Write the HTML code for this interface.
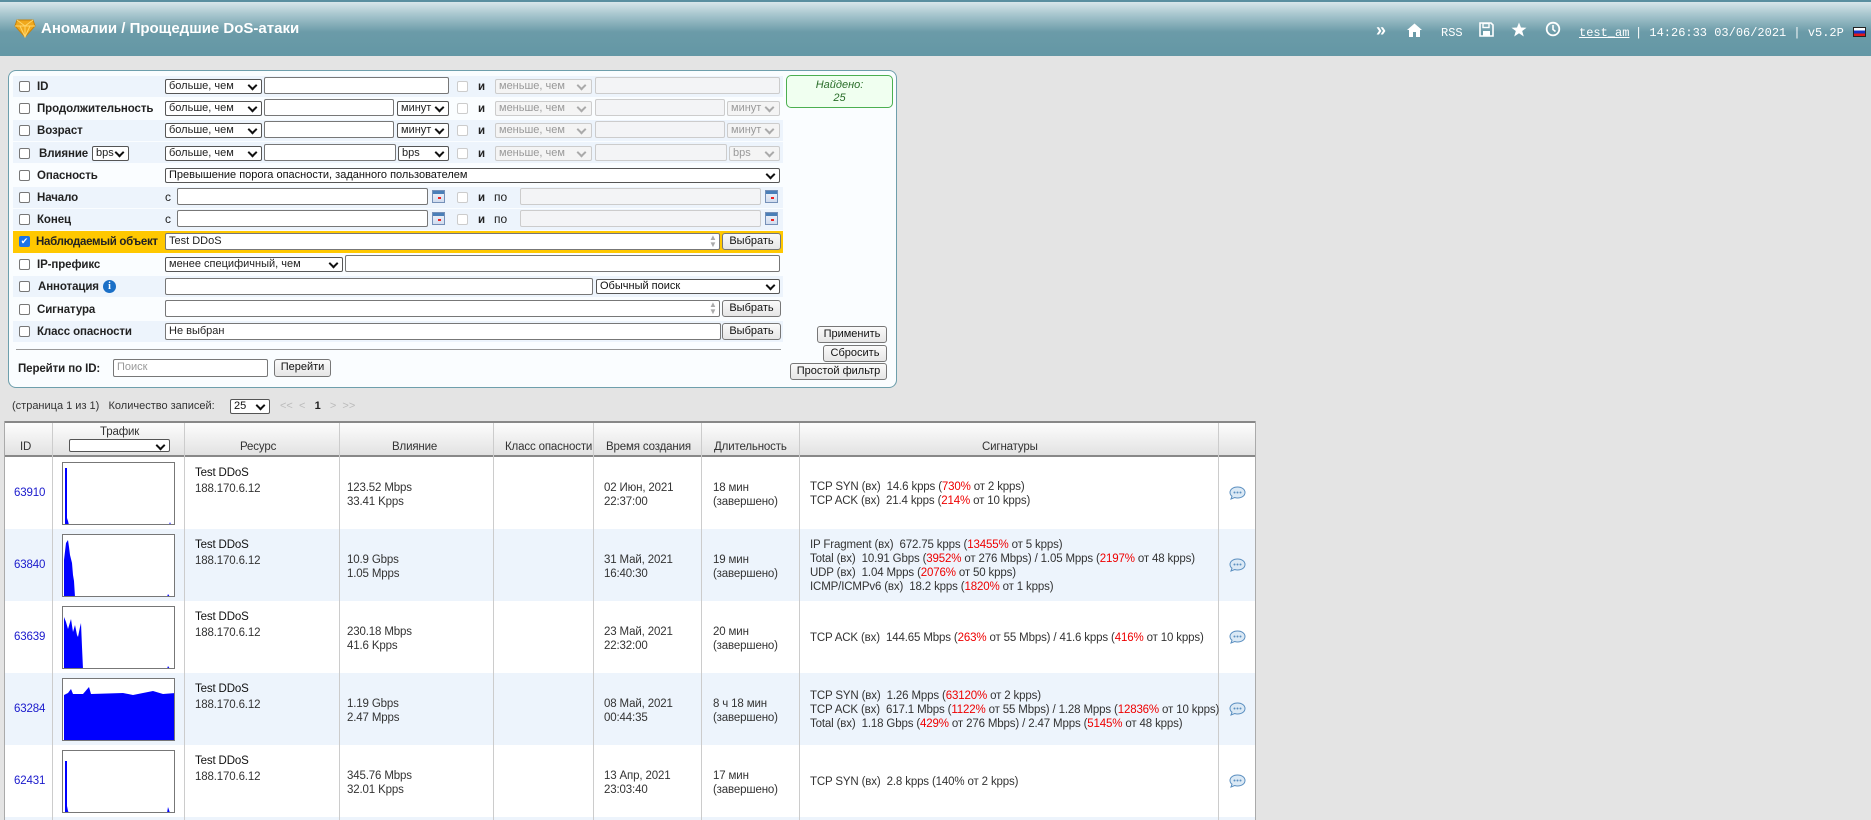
<!DOCTYPE html>
<html><head><meta charset="utf-8"><style>
*{box-sizing:border-box;margin:0;padding:0}
body{width:1871px;height:820px;overflow:hidden;background:#e4e4e4;font-family:"Liberation Sans",Arial,sans-serif;font-size:12px;color:#222;position:relative}
.a{position:absolute}
.hdr{left:0;top:0;width:1871px;height:56px;background:linear-gradient(#d8e6ea 0,#a9c7cf 12px,#6b9ba8 30px,#6397a5 56px);border-top:2px solid #5a8fa0}
.ttl{left:41px;top:20px;color:#fff;font-weight:bold;font-size:15px}
.hr{top:26px;color:#fff;font-family:"Liberation Mono",monospace;font-size:12px}
.panel{left:8px;top:70px;width:889px;height:318px;background:#fafdff;border:1px solid #6e9fac;border-radius:8px}
.row{left:13px;width:770px;height:21px}
.lb{font-weight:bold;font-size:11.5px;color:#222;letter-spacing:-0.1px;line-height:14px;padding-top:1px}
.cb{width:11px;height:11px;border:1px solid #777;border-radius:2px;background:#fff}
.cbd{width:11px;height:11px;border:1px solid #ccc;border-radius:2px;background:#fff}
.sel{height:15px;border:1px solid #555;background:#fff;font-size:11px;padding-left:3px;line-height:13px;border-radius:2px}
.sel:after{content:"";position:absolute;right:5px;top:2px;width:5px;height:5px;border-right:2px solid #111;border-bottom:2px solid #111;transform:rotate(45deg)}
.seld{height:15px;border:1px solid #ccc;background:#f4f4f4;color:#999;font-size:11px;padding-left:3px;line-height:13px;border-radius:2px}
.seld:after{content:"";position:absolute;right:6px;top:2px;width:5px;height:5px;border-right:2px solid #aaa;border-bottom:2px solid #aaa;transform:rotate(45deg)}
.inp{height:17px;border:1px solid #777;background:#fff;border-radius:2px;font-size:11px;padding-left:3px;line-height:15px}
.inpd{height:17px;border:1px solid #ccc;background:#f3f4f6;border-radius:2px}
.btn{height:17px;border:1px solid #777;background:linear-gradient(#fafafa,#e6e6e6);border-radius:3px;font-size:11px;text-align:center;line-height:15px;color:#111}
.cal{width:13px;height:13px;background:linear-gradient(#4a7fb8 0,#4a7fb8 3px,#e8eef8 3px,#d0dcef 100%);border:1px solid #7590b8}
.cal:after{content:"";position:absolute;left:5px;top:6px;width:3px;height:2px;background:#e22}
.th{top:421px;height:36px;background:linear-gradient(#fdfdfd,#e2e2e2);border-top:2px solid #888;border-bottom:2px solid #888}
.c{font-size:11.5px;color:#333;line-height:14px;letter-spacing:-0.15px;white-space:nowrap}
.gr{border:1px solid #777;background:#fff;width:113px;height:63px;overflow:hidden}
.r{color:#e00}
</style></head><body>
<div class="a hdr"></div>
<svg class="a" style="left:14px;top:18px" width="22" height="20" viewBox="0 0 22 20"><polygon points="3,2 19,2 21,8 11,19 1,8" fill="#f0a81c" stroke="#c7820a"/><path d="M3,2 L11,8 L19,2 M1,8 L11,8 L21,8 M11,8 L11,19 M6,8 L11,19 L16,8" stroke="#ffd66a" fill="none" stroke-width="1"/></svg>
<div class="a ttl">Аномалии / Прощедшие DoS-атаки</div>
<div class="a hr" style="left:1376px;top:20px;font-size:18px;font-family:'Liberation Sans';font-weight:bold">»</div>
<svg class="a" style="left:1406px;top:23px" width="17" height="14" viewBox="0 0 17 14"><path d="M1,7 L8.5,0.5 L16,7 L14,7 L14,14 L10,14 L10,9 L7,9 L7,14 L3,14 L3,7Z" fill="#fff"/></svg>
<div class="a hr" style="left:1441px">RSS</div>
<svg class="a" style="left:1479px;top:22px" width="15" height="15" viewBox="0 0 15 15"><path d="M1,1 H12 L14,3 V14 H1Z" fill="none" stroke="#fff" stroke-width="1.6"/><rect x="4" y="1.5" width="6" height="4" fill="none" stroke="#fff" stroke-width="1.4"/><rect x="4" y="9" width="7" height="5" fill="#fff"/></svg>
<svg class="a" style="left:1511px;top:22px" width="16" height="15" viewBox="0 0 16 15"><polygon points="8,0.5 10,5.5 15.5,5.7 11.2,9 12.8,14.5 8,11.3 3.2,14.5 4.8,9 0.5,5.7 6,5.5" fill="#fff"/></svg>
<svg class="a" style="left:1545px;top:21px" width="16" height="16" viewBox="0 0 16 16"><circle cx="8" cy="8" r="6.3" fill="none" stroke="#fff" stroke-width="1.8"/><path d="M8,4 V8.5 L10.5,10.5" stroke="#fff" stroke-width="1.6" fill="none"/></svg>
<div class="a hr" style="left:1579px;text-decoration:underline">test_am</div>
<div class="a hr" style="left:1635px">| 14:26:33 03/06/2021 | v5.2P</div>
<div class="a" style="left:1853px;top:27px;width:13px;height:10px;border:1px solid #222;background:linear-gradient(#fff 33%,#1432c8 33%,#1432c8 66%,#e01818 66%)"></div>

<div class="a panel"></div>
<div class="a row" style="top:76px;background:#edf4fc"></div>
<div class="a row" style="top:120px;background:#edf4fc"></div>
<div class="a row" style="top:142px;background:#edf4fc"></div>
<div class="a row" style="top:187px;background:#edf4fc"></div>
<div class="a row" style="top:209px;background:#edf4fc"></div>
<div class="a row" style="top:231px;background:#ffc800;height:22px"></div>
<div class="a row" style="top:276px;background:#edf4fc"></div>
<div class="a row" style="top:321px;background:#edf4fc"></div>

<div class="a cb" style="left:19px;top:81px"></div><div class="a lb" style="left:37px;top:79px">ID</div>
<div class="a sel" style="left:165px;top:79px;width:97px">больше, чем</div>
<div class="a inp" style="left:264px;top:77px;width:185px"></div>
<div class="a cbd" style="left:457px;top:81px"></div><div class="a lb" style="left:478px;top:79px">и</div>
<div class="a seld" style="left:495px;top:79px;width:97px">меньше, чем</div>
<div class="a inpd" style="left:595px;top:77px;width:185px"></div>

<div class="a cb" style="left:19px;top:103px"></div><div class="a lb" style="left:37px;top:101px">Продолжительность</div>
<div class="a sel" style="left:165px;top:101px;width:97px">больше, чем</div>
<div class="a inp" style="left:264px;top:99px;width:130px"></div>
<div class="a sel" style="left:397px;top:101px;width:52px">минут</div>
<div class="a cbd" style="left:457px;top:103px"></div><div class="a lb" style="left:478px;top:101px">и</div>
<div class="a seld" style="left:495px;top:101px;width:97px">меньше, чем</div>
<div class="a inpd" style="left:595px;top:99px;width:130px"></div>
<div class="a seld" style="left:727px;top:101px;width:53px">минут</div>

<div class="a cb" style="left:19px;top:125px"></div><div class="a lb" style="left:37px;top:123px">Возраст</div>
<div class="a sel" style="left:165px;top:123px;width:97px">больше, чем</div>
<div class="a inp" style="left:264px;top:121px;width:130px"></div>
<div class="a sel" style="left:397px;top:123px;width:52px">минут</div>
<div class="a cbd" style="left:457px;top:125px"></div><div class="a lb" style="left:478px;top:123px">и</div>
<div class="a seld" style="left:495px;top:123px;width:97px">меньше, чем</div>
<div class="a inpd" style="left:595px;top:121px;width:130px"></div>
<div class="a seld" style="left:727px;top:123px;width:53px">минут</div>

<div class="a cb" style="left:19px;top:148px"></div><div class="a lb" style="left:39px;top:146px">Влияние</div>
<div class="a sel" style="left:92px;top:146px;width:37px">bps</div>
<div class="a sel" style="left:165px;top:146px;width:97px">больше, чем</div>
<div class="a inp" style="left:264px;top:144px;width:132px"></div>
<div class="a sel" style="left:398px;top:146px;width:51px">bps</div>
<div class="a cbd" style="left:457px;top:148px"></div><div class="a lb" style="left:478px;top:146px">и</div>
<div class="a seld" style="left:495px;top:146px;width:97px">меньше, чем</div>
<div class="a inpd" style="left:595px;top:144px;width:132px"></div>
<div class="a seld" style="left:729px;top:146px;width:51px">bps</div>

<div class="a cb" style="left:19px;top:170px"></div><div class="a lb" style="left:37px;top:168px">Опасность</div>
<div class="a sel" style="left:165px;top:168px;width:615px;color:#111">Превышение порога опасности, заданного пользователем</div>

<div class="a cb" style="left:19px;top:192px"></div><div class="a lb" style="left:37px;top:190px">Начало</div>
<div class="a" style="left:165px;top:190px">с</div>
<div class="a inp" style="left:177px;top:188px;width:251px"></div>
<div class="a cal" style="left:432px;top:190px"></div>
<div class="a cbd" style="left:457px;top:192px"></div><div class="a lb" style="left:478px;top:190px">и</div><div class="a" style="left:494px;top:190px">по</div>
<div class="a inpd" style="left:520px;top:188px;width:241px"></div>
<div class="a cal" style="left:765px;top:190px"></div>

<div class="a cb" style="left:19px;top:214px"></div><div class="a lb" style="left:37px;top:212px">Конец</div>
<div class="a" style="left:165px;top:212px">с</div>
<div class="a inp" style="left:177px;top:210px;width:251px"></div>
<div class="a cal" style="left:432px;top:212px"></div>
<div class="a cbd" style="left:457px;top:214px"></div><div class="a lb" style="left:478px;top:212px">и</div><div class="a" style="left:494px;top:212px">по</div>
<div class="a inpd" style="left:520px;top:210px;width:241px"></div>
<div class="a cal" style="left:765px;top:212px"></div>

<div class="a" style="left:19px;top:236px;width:11px;height:11px;background:#1a73e8;border-radius:2px;color:#fff;font-size:9px;line-height:11px;text-align:center">✔</div>
<div class="a lb" style="left:36px;top:234px;letter-spacing:-0.3px">Наблюдаемый объект</div>
<div class="a inp" style="left:165px;top:233px;width:555px">Test DDoS</div>
<div class="a" style="left:709px;top:234px;color:#aaa;font-size:8px;line-height:7px">▲<br>▼</div>
<div class="a btn" style="left:722px;top:233px;width:59px">Выбрать</div>

<div class="a cb" style="left:19px;top:259px"></div><div class="a lb" style="left:37px;top:257px">IP-префикс</div>
<div class="a sel" style="left:165px;top:257px;width:178px">менее специфичный, чем</div>
<div class="a inp" style="left:345px;top:255px;width:435px"></div>

<div class="a cb" style="left:19px;top:281px"></div><div class="a lb" style="left:38px;top:279px">Аннотация</div>
<div class="a" style="left:103px;top:280px;width:13px;height:13px;border-radius:50%;background:#1a6fc7;color:#fff;font-size:10px;font-weight:bold;text-align:center;line-height:13px;font-family:'Liberation Serif'">i</div>
<div class="a inp" style="left:165px;top:278px;width:428px"></div>
<div class="a sel" style="left:596px;top:279px;width:184px;color:#111">Обычный поиск</div>

<div class="a cb" style="left:19px;top:304px"></div><div class="a lb" style="left:37px;top:302px">Сигнатура</div>
<div class="a inp" style="left:165px;top:300px;width:555px"></div>
<div class="a" style="left:709px;top:301px;color:#aaa;font-size:8px;line-height:7px">▲<br>▼</div>
<div class="a btn" style="left:722px;top:300px;width:59px">Выбрать</div>

<div class="a cb" style="left:19px;top:326px"></div><div class="a lb" style="left:37px;top:324px">Класс опасности</div>
<div class="a inp" style="left:165px;top:323px;width:556px">Не выбран</div>
<div class="a btn" style="left:722px;top:323px;width:59px">Выбрать</div>
<div class="a" style="left:16px;top:349px;width:765px;height:1px;background:#999"></div>
<div class="a lb" style="left:18px;top:361px">Перейти по ID:</div>
<div class="a inp" style="left:113px;top:359px;width:155px;color:#999;height:18px">Поиск</div>
<div class="a btn" style="left:274px;top:359px;width:57px;height:18px">Перейти</div>
<div class="a" style="left:786px;top:75px;width:107px;height:33px;border:1px solid #4caf50;border-radius:5px;background:#f0fff0;color:#2a6e2a;font-style:italic;font-size:11px;text-align:center;line-height:13px;padding-top:3px">Найдено:<br>25</div>
<div class="a btn" style="left:817px;top:326px;width:70px">Применить</div>
<div class="a btn" style="left:823px;top:345px;width:64px">Сбросить</div>
<div class="a btn" style="left:790px;top:363px;width:97px">Простой фильтр</div>

<div class="a" style="left:12px;top:400px;font-size:11px;color:#333">(страница 1 из 1) &nbsp; Количество записей:</div>
<div class="a sel" style="left:230px;top:399px;width:40px;color:#111">25</div>
<div class="a" style="left:280px;top:400px;font-size:11px;color:#bbb">&lt;&lt; &nbsp;&lt; &nbsp; <b style="color:#222">1</b> &nbsp; &gt; &nbsp;&gt;&gt;</div>

<div class="a" style="left:4px;top:421px;width:1251px;height:399px;background:#fff"></div>
<div class="a th" style="left:4px;width:1251px"></div>
<div class="a" style="left:4px;top:529px;width:1251px;height:72px;background:#edf4fc"></div>
<div class="a" style="left:4px;top:673px;width:1251px;height:72px;background:#edf4fc"></div>
<div class="a" style="left:4px;top:817px;width:1251px;height:3px;background:#edf4fc"></div>
<div class="a" style="left:4px;top:421px;width:1px;height:399px;background:#aaa"></div>
<div class="a" style="left:1255px;top:421px;width:1px;height:399px;background:#aaa"></div>
<div class="a" style="left:52px;top:423px;width:1px;height:397px;background:#ccc"></div>
<div class="a" style="left:184px;top:423px;width:1px;height:397px;background:#ccc"></div>
<div class="a" style="left:339px;top:423px;width:1px;height:397px;background:#ccc"></div>
<div class="a" style="left:493px;top:423px;width:1px;height:397px;background:#ccc"></div>
<div class="a" style="left:593px;top:423px;width:1px;height:397px;background:#ccc"></div>
<div class="a" style="left:701px;top:423px;width:1px;height:397px;background:#ccc"></div>
<div class="a" style="left:799px;top:423px;width:1px;height:397px;background:#ccc"></div>
<div class="a" style="left:1218px;top:423px;width:1px;height:397px;background:#ccc"></div>
<div class="a c" style="left:20px;top:440px">ID</div>
<div class="a c" style="left:100px;top:425px">Трафик</div>
<div class="a sel" style="left:69px;top:439px;width:101px;height:13px"></div>
<div class="a c" style="left:240px;top:440px">Ресурс</div>
<div class="a c" style="left:392px;top:440px">Влияние</div>
<div class="a c" style="left:505px;top:440px">Класс опасности</div>
<div class="a c" style="left:606px;top:440px">Время создания</div>
<div class="a c" style="left:714px;top:440px">Длительность</div>
<div class="a c" style="left:982px;top:440px">Сигнатуры</div>

<div class="a c" style="left:14px;top:486px;color:#1a1acc">63910</div>
<div class="a gr" style="left:62px;top:462px"><svg width="113" height="63"><polygon points="2,62 2,5 4,5 4,55 5,58 6,62" fill="#00f"/><polygon points="106,62 107,59 108,62" fill="#00f"/></svg></div>
<div class="a c" style="left:195px;top:466px;color:#111">Test DDoS</div><div class="a c" style="left:195px;top:482px">188.170.6.12</div>
<div class="a c" style="left:347px;top:481px">123.52 Mbps<br>33.41 Kpps</div>
<div class="a c" style="left:604px;top:481px">02 Июн, 2021<br>22:37:00</div>
<div class="a c" style="left:713px;top:481px">18 мин<br>(завершено)</div>
<div class="a c" style="left:810px;top:480px">TCP SYN (вх)&nbsp; 14.6 kpps (<span class="r">730%</span> от 2 kpps)<br>TCP ACK (вх)&nbsp; 21.4 kpps (<span class="r">214%</span> от 10 kpps)</div>

<div class="a c" style="left:14px;top:558px;color:#1a1acc">63840</div>
<div class="a gr" style="left:62px;top:534px"><svg width="113" height="63"><polygon points="1,62 1,25 3,8 5,5 6,12 7,20 9,28 10,40 11,46 12,62" fill="#00f"/><polygon points="104,62 105,59 107,62" fill="#00f"/></svg></div>
<div class="a c" style="left:195px;top:538px;color:#111">Test DDoS</div><div class="a c" style="left:195px;top:554px">188.170.6.12</div>
<div class="a c" style="left:347px;top:553px">10.9 Gbps<br>1.05 Mpps</div>
<div class="a c" style="left:604px;top:553px">31 Май, 2021<br>16:40:30</div>
<div class="a c" style="left:713px;top:553px">19 мин<br>(завершено)</div>
<div class="a c" style="left:810px;top:538px">IP Fragment (вх)&nbsp; 672.75 kpps (<span class="r">13455%</span> от 5 kpps)<br>Total (вх)&nbsp; 10.91 Gbps (<span class="r">3952%</span> от 276 Mbps) / 1.05 Mpps (<span class="r">2197%</span> от 48 kpps)<br>UDP (вх)&nbsp; 1.04 Mpps (<span class="r">2076%</span> от 50 kpps)<br>ICMP/ICMPv6 (вх)&nbsp; 18.2 kpps (<span class="r">1820%</span> от 1 kpps)</div>

<div class="a c" style="left:14px;top:630px;color:#1a1acc">63639</div>
<div class="a gr" style="left:62px;top:606px"><svg width="113" height="63"><polygon points="1,62 1,10 3,15 5,22 8,12 10,25 12,18 14,28 15,30 17,20 18,16 19,40 20,62" fill="#00f"/><polygon points="104,62 105,59 107,62" fill="#00f"/></svg></div>
<div class="a c" style="left:195px;top:610px;color:#111">Test DDoS</div><div class="a c" style="left:195px;top:626px">188.170.6.12</div>
<div class="a c" style="left:347px;top:625px">230.18 Mbps<br>41.6 Kpps</div>
<div class="a c" style="left:604px;top:625px">23 Май, 2021<br>22:32:00</div>
<div class="a c" style="left:713px;top:625px">20 мин<br>(завершено)</div>
<div class="a c" style="left:810px;top:631px">TCP ACK (вх)&nbsp; 144.65 Mbps (<span class="r">263%</span> от 55 Mbps) / 41.6 kpps (<span class="r">416%</span> от 10 kpps)</div>

<div class="a c" style="left:14px;top:702px;color:#1a1acc">63284</div>
<div class="a gr" style="left:62px;top:678px"><svg width="113" height="63"><polygon points="1,62 1,16 5,14 8,10 10,15 20,15 26,8 28,15 60,14 70,16 90,12 100,15 112,14 112,62" fill="#00f"/></svg></div>
<div class="a c" style="left:195px;top:682px;color:#111">Test DDoS</div><div class="a c" style="left:195px;top:698px">188.170.6.12</div>
<div class="a c" style="left:347px;top:697px">1.19 Gbps<br>2.47 Mpps</div>
<div class="a c" style="left:604px;top:697px">08 Май, 2021<br>00:44:35</div>
<div class="a c" style="left:713px;top:697px">8 ч 18 мин<br>(завершено)</div>
<div class="a c" style="left:810px;top:689px">TCP SYN (вх)&nbsp; 1.26 Mpps (<span class="r">63120%</span> от 2 kpps)<br>TCP ACK (вх)&nbsp; 617.1 Mbps (<span class="r">1122%</span> от 55 Mbps) / 1.28 Mpps (<span class="r">12836%</span> от 10 kpps)<br>Total (вх)&nbsp; 1.18 Gbps (<span class="r">429%</span> от 276 Mbps) / 2.47 Mpps (<span class="r">5145%</span> от 48 kpps)</div>

<div class="a c" style="left:14px;top:774px;color:#1a1acc">62431</div>
<div class="a gr" style="left:62px;top:750px"><svg width="113" height="63"><polygon points="2,62 2,10 4,10 4,55 5,60 6,62" fill="#00f"/><polygon points="104,62 105,56 107,62" fill="#00f"/></svg></div>
<div class="a c" style="left:195px;top:754px;color:#111">Test DDoS</div><div class="a c" style="left:195px;top:770px">188.170.6.12</div>
<div class="a c" style="left:347px;top:769px">345.76 Mbps<br>32.01 Kpps</div>
<div class="a c" style="left:604px;top:769px">13 Апр, 2021<br>23:03:40</div>
<div class="a c" style="left:713px;top:769px">17 мин<br>(завершено)</div>
<div class="a c" style="left:810px;top:775px">TCP SYN (вх)&nbsp; 2.8 kpps (140% от 2 kpps)</div>

<svg class="a" style="left:1229px;top:486px" width="17" height="14" viewBox="0 0 17 14"><path d="M8.5,1 C13,1 16,3.5 16,6.5 C16,9.5 13,12 8.5,12 C7.5,12 6.5,11.8 5.7,11.5 L2,13 L3,10.2 C1.7,9.2 1,7.9 1,6.5 C1,3.5 4,1 8.5,1Z" fill="#dbe9f5" stroke="#5b8fc0"/><circle cx="5.5" cy="6.5" r="1" fill="#5b8fc0"/><circle cx="8.5" cy="6.5" r="1" fill="#5b8fc0"/><circle cx="11.5" cy="6.5" r="1" fill="#5b8fc0"/></svg>
<svg class="a" style="left:1229px;top:558px" width="17" height="14" viewBox="0 0 17 14"><path d="M8.5,1 C13,1 16,3.5 16,6.5 C16,9.5 13,12 8.5,12 C7.5,12 6.5,11.8 5.7,11.5 L2,13 L3,10.2 C1.7,9.2 1,7.9 1,6.5 C1,3.5 4,1 8.5,1Z" fill="#dbe9f5" stroke="#5b8fc0"/><circle cx="5.5" cy="6.5" r="1" fill="#5b8fc0"/><circle cx="8.5" cy="6.5" r="1" fill="#5b8fc0"/><circle cx="11.5" cy="6.5" r="1" fill="#5b8fc0"/></svg>
<svg class="a" style="left:1229px;top:630px" width="17" height="14" viewBox="0 0 17 14"><path d="M8.5,1 C13,1 16,3.5 16,6.5 C16,9.5 13,12 8.5,12 C7.5,12 6.5,11.8 5.7,11.5 L2,13 L3,10.2 C1.7,9.2 1,7.9 1,6.5 C1,3.5 4,1 8.5,1Z" fill="#dbe9f5" stroke="#5b8fc0"/><circle cx="5.5" cy="6.5" r="1" fill="#5b8fc0"/><circle cx="8.5" cy="6.5" r="1" fill="#5b8fc0"/><circle cx="11.5" cy="6.5" r="1" fill="#5b8fc0"/></svg>
<svg class="a" style="left:1229px;top:702px" width="17" height="14" viewBox="0 0 17 14"><path d="M8.5,1 C13,1 16,3.5 16,6.5 C16,9.5 13,12 8.5,12 C7.5,12 6.5,11.8 5.7,11.5 L2,13 L3,10.2 C1.7,9.2 1,7.9 1,6.5 C1,3.5 4,1 8.5,1Z" fill="#dbe9f5" stroke="#5b8fc0"/><circle cx="5.5" cy="6.5" r="1" fill="#5b8fc0"/><circle cx="8.5" cy="6.5" r="1" fill="#5b8fc0"/><circle cx="11.5" cy="6.5" r="1" fill="#5b8fc0"/></svg>
<svg class="a" style="left:1229px;top:774px" width="17" height="14" viewBox="0 0 17 14"><path d="M8.5,1 C13,1 16,3.5 16,6.5 C16,9.5 13,12 8.5,12 C7.5,12 6.5,11.8 5.7,11.5 L2,13 L3,10.2 C1.7,9.2 1,7.9 1,6.5 C1,3.5 4,1 8.5,1Z" fill="#dbe9f5" stroke="#5b8fc0"/><circle cx="5.5" cy="6.5" r="1" fill="#5b8fc0"/><circle cx="8.5" cy="6.5" r="1" fill="#5b8fc0"/><circle cx="11.5" cy="6.5" r="1" fill="#5b8fc0"/></svg>
</body></html>
